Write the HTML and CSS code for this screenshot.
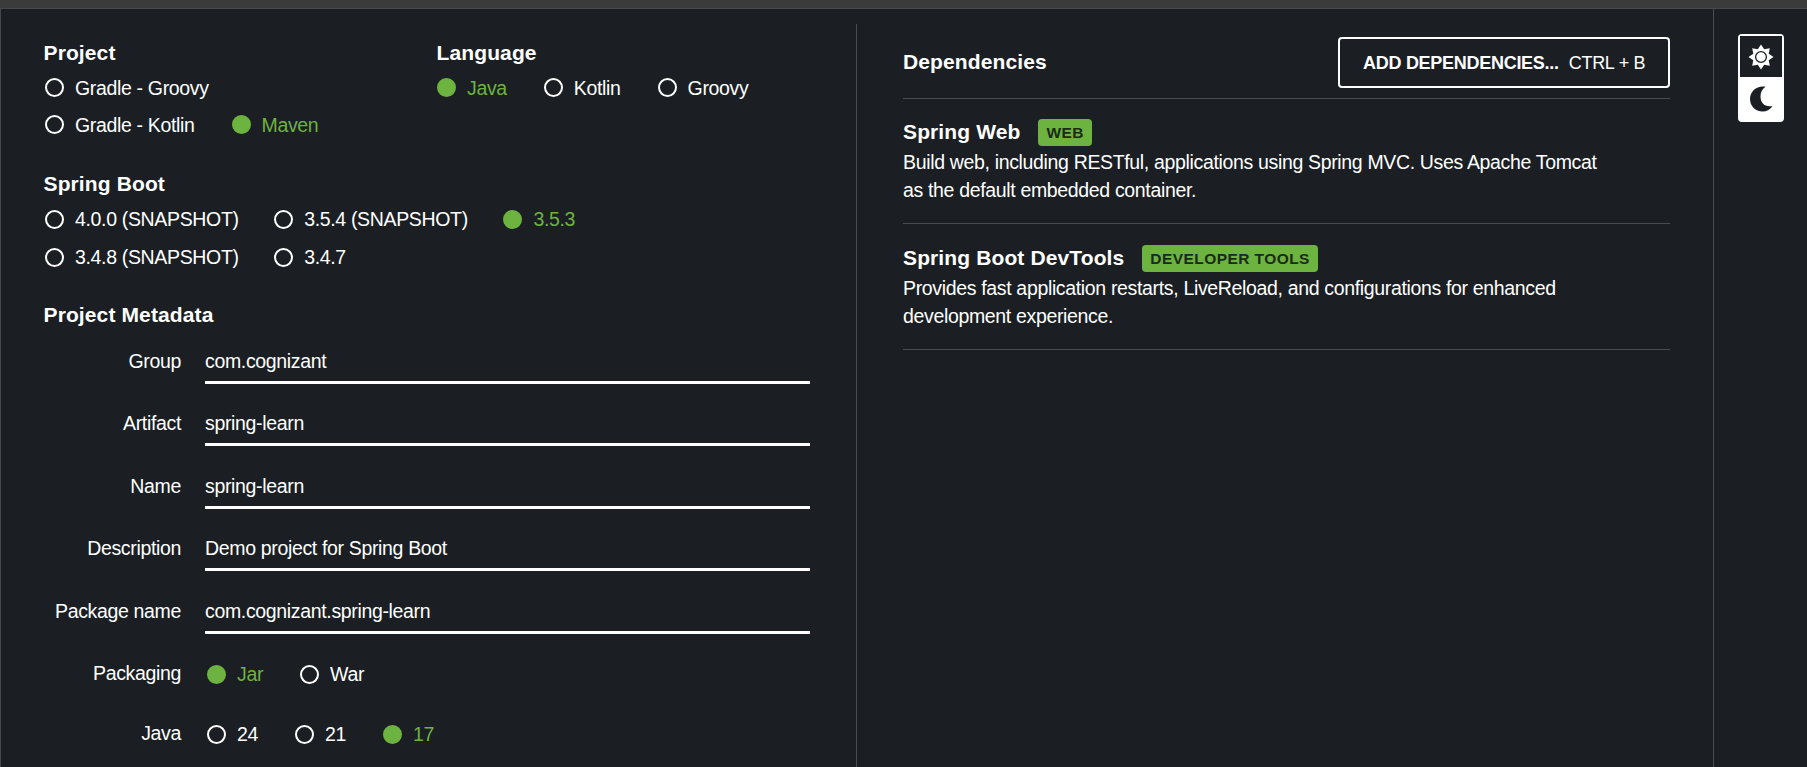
FILE: index.html
```html
<!DOCTYPE html>
<html lang="en">
<head>
<meta charset="utf-8">
<title>Spring Initializr</title>
<link rel="stylesheet" href="styles.css">
</head>
<body>
<div class="topbar"></div>
<div class="app">
  <main class="left">
    <div class="row-top">
      <section class="project">
        <h2>Project</h2>
        <div class="radios"><span class="radio"><i></i>Gradle - Groovy</span></div>
        <div class="radios"><span class="radio"><i></i>Gradle - Kotlin</span><span class="radio on"><i></i>Maven</span></div>
      </section>
      <section class="language">
        <h2>Language</h2>
        <div class="radios"><span class="radio on"><i></i>Java</span><span class="radio"><i></i>Kotlin</span><span class="radio"><i></i>Groovy</span></div>
      </section>
    </div>
    <section class="boot">
      <h2>Spring Boot</h2>
      <div class="radios"><span class="radio"><i></i>4.0.0 (SNAPSHOT)</span><span class="radio"><i></i>3.5.4 (SNAPSHOT)</span><span class="radio on"><i></i>3.5.3</span></div>
      <div class="radios"><span class="radio"><i></i>3.4.8 (SNAPSHOT)</span><span class="radio"><i></i>3.4.7</span></div>
    </section>
    <section class="meta">
      <h2>Project Metadata</h2>
      <div class="field"><label>Group</label><div class="input">com.cognizant</div></div>
      <div class="field"><label>Artifact</label><div class="input">spring-learn</div></div>
      <div class="field"><label>Name</label><div class="input">spring-learn</div></div>
      <div class="field"><label>Description</label><div class="input">Demo project for Spring Boot</div></div>
      <div class="field"><label>Package name</label><div class="input">com.cognizant.spring-learn</div></div>
      <div class="field choice"><label>Packaging</label><div class="radios"><span class="radio on"><i></i>Jar</span><span class="radio"><i></i>War</span></div></div>
      <div class="field choice"><label>Java</label><div class="radios"><span class="radio"><i></i>24</span><span class="radio"><i></i>21</span><span class="radio on"><i></i>17</span></div></div>
    </section>
  </main>
  <section class="deps">
    <header class="deps-head">
      <h2>Dependencies</h2>
      <div class="button"><b>ADD DEPENDENCIES...</b><span>CTRL + B</span></div>
    </header>
    <article class="dep">
      <h3>Spring Web<span class="tag">WEB</span></h3>
      <p>Build web, including RESTful, applications using Spring MVC. Uses Apache Tomcat<br>as the default embedded container.</p>
    </article>
    <article class="dep">
      <h3>Spring Boot DevTools<span class="tag">DEVELOPER TOOLS</span></h3>
      <p>Provides fast application restarts, LiveReload, and configurations for enhanced<br>development experience.</p>
    </article>
  </section>
  <aside class="side">
    <div class="toggle">
      <div class="mode"><svg width="26" height="26" viewBox="-13 -13 26 26"><path fill="#fff" d="M0-12.500 3.200-7.700 8.800-8.800 7.700-3.200 12.500 0 7.700 3.200 8.800 8.800 3.200 7.700 0 12.500-3.200 7.700-8.800 8.800-7.700 3.200-12.500 0-7.700-3.200-8.800-8.800-3.200-7.700Z"/><circle r="5.400" fill="#fff" stroke="#1b1f23" stroke-width="1.300"/></svg></div>
      <div class="mode active"><svg width="24" height="26" viewBox="0 0 24 26"><path fill="#1b1f23" d="M16.500.8C8.500-.8 1 5 1 13c0 7 5.500 12.500 12.500 12.500 4.500 0 8-2 10-5.500C16 21.500 11.500 17 11.500 10.500c0-4 1.500-7.500 5-9.700Z"/></svg></div>
    </div>
  </aside>
</div>
</body>
</html>
```

FILE: styles.css
```css
* { box-sizing: border-box; }
body {
  margin: 0;
  height: 767px;
  overflow: hidden;
  display: flex;
  flex-direction: column;
  background: #1b1f23;
  color: #fff;
  font: 19.5px/28px "Liberation Sans", Arial, sans-serif;
  letter-spacing: -0.34px;
}
h2, h3, p { margin: 0; }
h2, h3 { font-size: 21px; line-height: 28px; font-weight: 700; letter-spacing: 0.12px; }
.topbar { height: 8px; flex: none; background: #3b3b3b; }
.app {
  flex: 1;
  display: flex;
  border-top: 1px solid #48494b;
  border-left: 1px solid #48494b;
}
.left { width: 856px; padding: 30px 46px 0 42px; border-right: 1px solid #4a4d50; border-image: linear-gradient(transparent 16px, #4a4d50 16px) 1; }
.row-top { display: flex; height: 131px; }
.row-top h2, .boot h2 { margin-bottom: 2px; }
.left h2 { padding-left: 0.5px; }
.project { width: 393px; }
.language .radios { padding-left: 1px; }
.radios { display: flex; gap: 37px; height: 37px; padding-left: 2px; align-items: center; }
.radio { display: flex; align-items: center; line-height: 28px; white-space: nowrap; }
.radio i { width: 19px; height: 19px; margin-right: 11px; border: 2px solid #fff; border-radius: 50%; }
.on { color: #6db33f; }
.on i { background: #6db33f; border-color: #6db33f; }
.boot { height: 131px; }
.boot .radios { height: 38px; gap: 35.6px; }
.meta h2 { margin-bottom: 12px; }
.field { display: flex; height: 62.4px; }
.field label { width: 138px; text-align: right; margin-right: 24px; padding-top: 6px; }
.input { flex: 1; height: 43px; padding-top: 6px; border-bottom: 3px solid #fff; }
.choice { height: 60px; padding-top: 0.5px; }
.choice .radios { height: 42px; }
.deps { width: 857px; padding: 28px 43px 0 46px; border-right: 1px solid #4a4d50; }
.deps-head { display: flex; justify-content: space-between; height: 62px; border-bottom: 1px solid #4a4d50; }
.deps-head h2 { padding-top: 11px; }
.button { height: 51px; width: 332px; padding-left: 23px; border: 2px solid #fff; border-radius: 4px; font-size: 18px; letter-spacing: -0.28px; line-height: 48px; white-space: nowrap; }
.button b { margin-right: 10px; }
.dep { height: 125px; padding-top: 18px; border-bottom: 1px solid #4a4d50; white-space: nowrap; }
.dep + .dep { height: 126px; padding-top: 19px; }
.dep h3 { display: flex; align-items: center; height: 29px; margin-bottom: 2px; }
.tag { margin: 1px 0 0 18px; height: 27px; padding: 0 8px; line-height: 28px; border-radius: 4px; background: #6db33f; color: #1b2a1b; font-size: 15.5px; letter-spacing: 0.43px; }
.side { flex: 1; padding: 25px 0 0 24px; }
.toggle { width: 46px; height: 88px; border: 2px solid #fff; border-radius: 4px; background: #fff; }
.mode { height: 41px; display: flex; align-items: center; justify-content: center; background: #1b1f23; }
.mode.active { height: 43px; background: #fff; }
```
